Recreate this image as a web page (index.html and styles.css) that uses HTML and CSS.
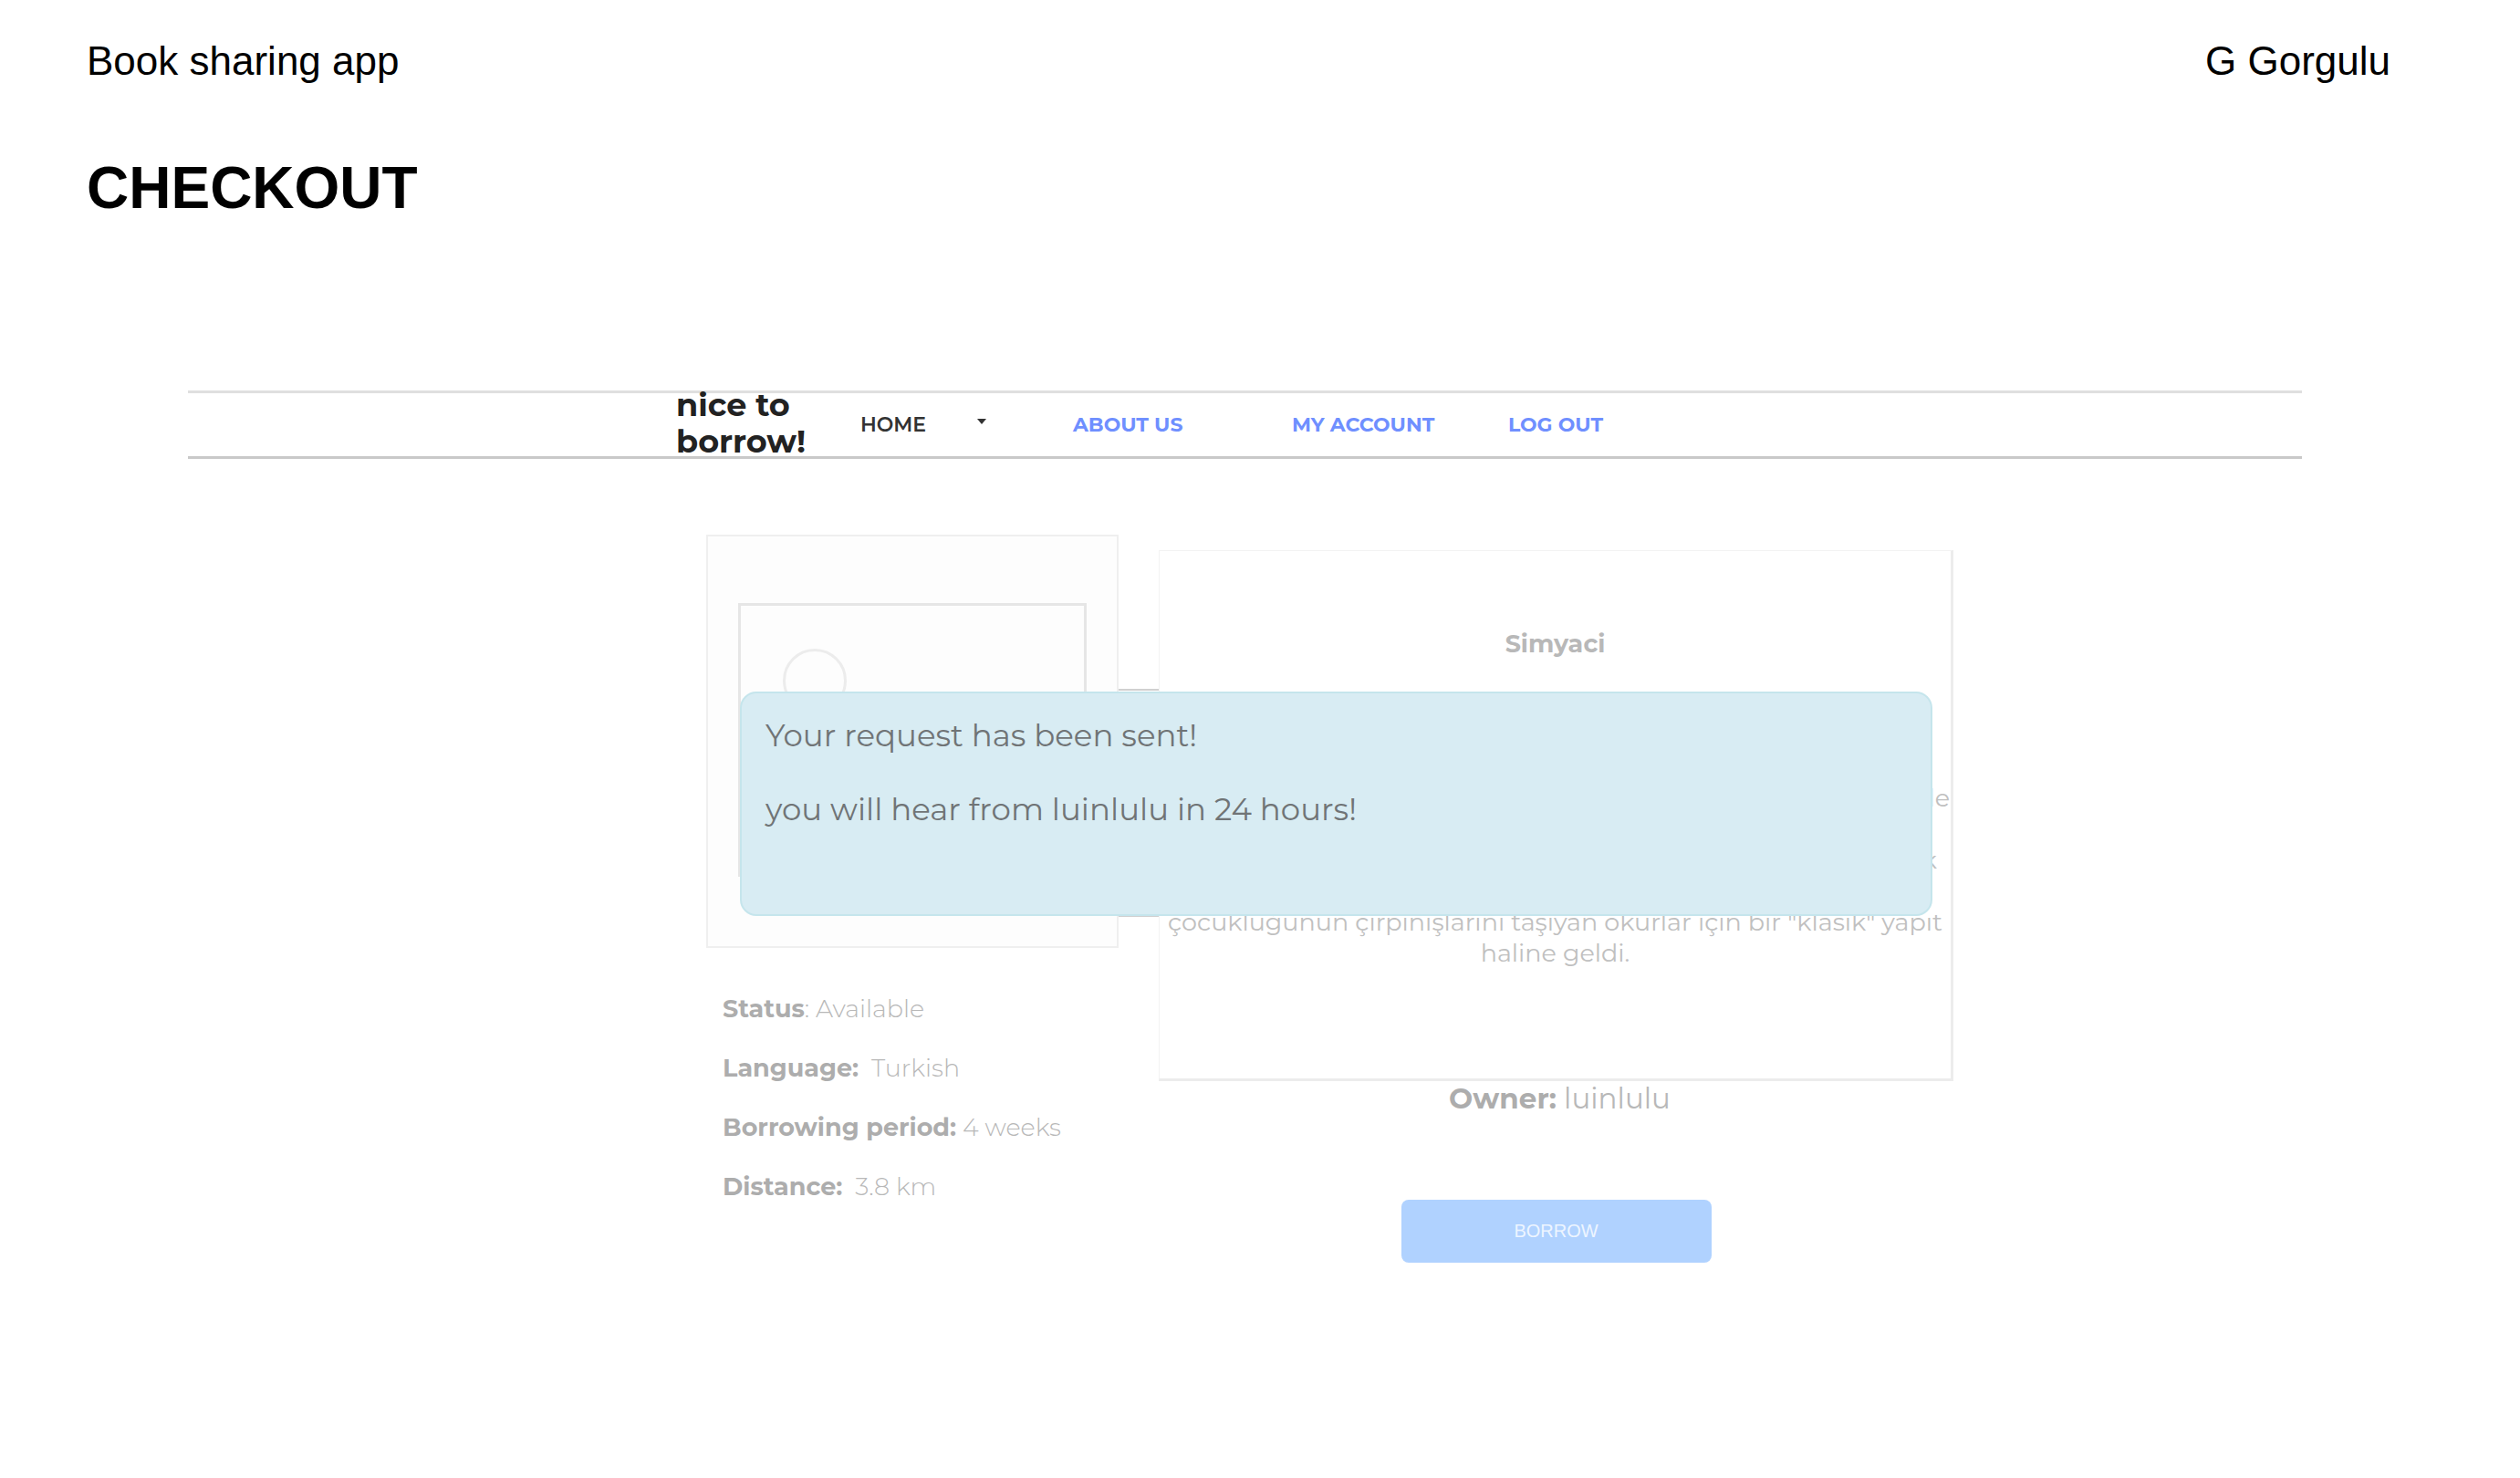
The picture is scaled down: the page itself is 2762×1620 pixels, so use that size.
FILE: index.html
```html
<!DOCTYPE html>
<html lang="en">
<head>
<meta charset="utf-8">
<title>Book sharing app – Checkout</title>
<link rel="stylesheet" href="styles.css">
</head>
<body>
<header class="deck-header">
  <span>Book sharing app</span>
  <span>G Gorgulu</span>
</header>
<h1 class="deck-title">CHECKOUT</h1>

<main class="frame">
  <nav class="nav">
    <div class="brand">nice to borrow!</div>
    <a class="nav-link home" href="#">HOME
      <svg class="caret" viewBox="0 0 10 6" aria-hidden="true"><path d="M0 0h10L5 6z"/></svg>
    </a>
    <a class="nav-link about" href="#">ABOUT US</a>
    <a class="nav-link account" href="#">MY ACCOUNT</a>
    <a class="nav-link" href="#">LOG OUT</a>
  </nav>

  <div class="product-row">
    <div class="product">
      <div class="backdrop"></div>
      <section class="left">
        <div class="cover">
          <div class="picture"><div class="sun"></div></div>
        </div>
        <ul class="facts">
          <li><b>Status</b>: Available</li>
          <li><b>Language:</b>&nbsp; Turkish</li>
          <li><b>Borrowing period:</b> 4 weeks</li>
          <li><b>Distance:</b>&nbsp; 3.8 km</li>
        </ul>
      </section>
      <section class="right">
        <article class="card">
          <h2 class="book-title">Simyaci</h2>
          <p class="tail">le</p>
          <p class="tail inset">k</p>
          <p class="blurb">çocukluğunun çırpınışlarını taşıyan okurlar için bir "klasik" yapıt haline geldi.</p>
        </article>
        <p class="owner"><b>Owner:</b> luinlulu</p>
        <button class="borrow" type="button">BORROW</button>
      </section>
      <div class="toast" role="status">
        <p>Your request has been sent!</p>
        <p>you will hear from luinlulu in 24 hours!</p>
      </div>
    </div>
  </div>
</main>
</body>
</html>
```
FILE: styles.css
```css
* { box-sizing: border-box; }

body {
  margin: 0;
  background: #fff;
  color: #000;
  font-family: "Liberation Sans", Arial, sans-serif;
}

p, ul, h1, h2 { margin: 0; padding: 0; }

.deck-header {
  display: flex;
  justify-content: space-between;
  padding: 41px 142px 0 95px;
  font-size: 44px;
  line-height: 52px;
}

.deck-title {
  padding: 77px 95px 0;
  font-size: 64px;
  line-height: 72px;
}

.frame {
  margin: 186px 239px 0 206px;
  font-family: Montserrat, Inter, sans-serif;
}

/* Navigation */
.nav {
  display: flex;
  align-items: center;
  height: 75px;
  padding-left: 535px;
  border-top: 3px solid #dfdfdf;
  border-bottom: 3px solid #c9c9c9;
}

.brand {
  width: 202px;
  padding: 0 40px 4px 0;
  color: #222;
  font-size: 35px;
  font-weight: 700;
  line-height: 40px;
}

.nav-link {
  color: #6f8fff;
  font-size: 22px;
  font-weight: 700;
  line-height: 28px;
  text-decoration: none;
  white-space: nowrap;
}

.home { display: flex; gap: 56px; width: 233px; color: #333; font-weight: 600; }
.about { width: 240px; }
.account { width: 237px; }
.caret { width: 10px; height: 6px; margin-top: 7px; fill: #333; }

/* Book details */
.product-row {
  display: grid;
  grid-template-columns: 568fr 1367fr 382fr;
  padding-top: 83px;
}

.product {
  position: relative;
  z-index: 0;
  grid-column: 2;
  display: grid;
  grid-template-columns: 452fr 871fr;
  column-gap: 44px;
}

.backdrop {
  position: absolute;
  z-index: -1;
  top: 169px;
  left: 60px;
  right: 60px;
  height: 250px;
  border: 2px solid #d0d0d0;
}

.cover {
  height: 453px;
  padding: 73px 33px 0;
  border: 2px solid #efefef;
  background: #fdfdfd;
}

.picture {
  height: 300px;
  padding: 47px 46px;
  border: 3px solid #e6e6e6;
  border-bottom: 0;
}

.sun {
  width: 70px;
  height: 70px;
  border: 3px solid #ececec;
  border-radius: 50%;
}

.facts {
  padding: 34px 0 0 18px;
  color: #b8b8b8;
  font-size: 27px;
  font-weight: 300;
  line-height: 65px;
  list-style: none;
  white-space: nowrap;
}

.facts b, .owner b { color: #adadad; font-weight: 700; }

.right {
  display: flex;
  flex-direction: column;
  align-items: center;
  padding-top: 17px;
}

.card {
  width: 100%;
  height: 582px;
  padding-top: 85px;
  border: 1px solid #f3f3f3;
  border-right: 3px solid #ececec;
  border-bottom: 3px solid #ececec;
  background: #fff;
  color: #c0c0c0;
  font-size: 27px;
  line-height: 34px;
  text-align: center;
}

.book-title {
  margin-bottom: 135px;
  color: #b8b8b8;
  font-size: 27px;
  line-height: 34px;
}

.tail { margin-bottom: 34px; padding-right: 1px; text-align: right; }
.inset { padding-right: 15px; }

.owner {
  padding-left: 8px;
  color: #b8b8b8;
  font-size: 31px;
  line-height: 38px;
}

.borrow {
  width: 340px;
  height: 69px;
  margin-top: 92px;
  border: 0;
  border-radius: 8px;
  background: #b0d2ff;
  color: #edf5ff;
  font: 20px "Liberation Sans", Arial, sans-serif;
}

/* Confirmation message over the details */
.toast {
  position: absolute;
  top: 172px;
  left: 37px;
  right: 23px;
  height: 246px;
  padding: 26px;
  border: 2px solid #c5e5ec;
  border-radius: 18px;
  background: #d8ecf3;
  color: #707476;
  font-size: 34px;
  line-height: 41px;
}

.toast p + p { margin-top: 40px; }
```
